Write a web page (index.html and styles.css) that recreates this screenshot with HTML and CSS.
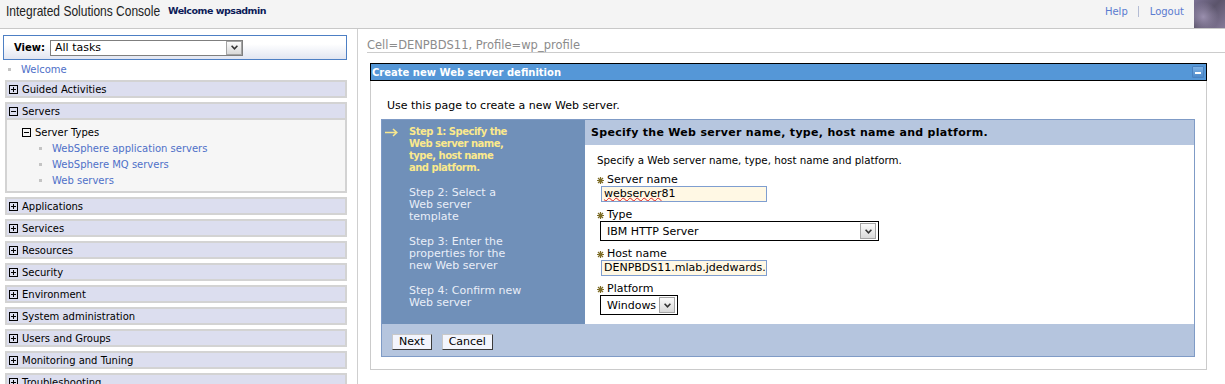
FILE: index.html
```html
<!DOCTYPE html>
<html lang="en">
<head>
<meta charset="utf-8">
<title>Integrated Solutions Console</title>
<link rel="stylesheet" href="styles.css">
</head>
<body>
<header class="topbar">
  <div class="brand"><span class="brand-text">Integrated Solutions Console</span></div>
  <div class="welcome">Welcome wpsadmin</div>
  <nav class="toplinks"><a href="#">Help</a><span class="sep"></span><a href="#">Logout</a></nav>
  <div class="photo"></div>
</header>
<div class="layout">
  <aside class="sidebar">
    <div class="viewbox">
      <span class="view-label">View:</span>
      <div class="dropdown view-dd"><span>All tasks</span><span class="dd-btn"><svg width="7" height="5" viewBox="0 0 7 5"><polyline points="0.6,0.8 3.5,3.8 6.4,0.8" fill="none" stroke="#333" stroke-width="1.6"/></svg></span></div>
    </div>
    <div class="welcome-link"><span class="bullet"></span><a href="#">Welcome</a></div>
    <ul class="navlist">
      <li><div class="navbar"><svg class="tog" width="9" height="9" viewBox="0 0 9 9"><rect x="0.5" y="0.5" width="8" height="8" fill="none" stroke="#000"/><path d="M2 4.5H7M4.5 2V7" stroke="#000"/></svg>Guided Activities</div></li>
      <li>
        <div class="navbar"><svg class="tog" width="9" height="9" viewBox="0 0 9 9"><rect x="0.5" y="0.5" width="8" height="8" fill="none" stroke="#000"/><path d="M2 4.5H7" stroke="#000"/></svg>Servers</div>
        <div class="navbody">
          <div class="subhead"><svg class="tog" width="9" height="9" viewBox="0 0 9 9"><rect x="0.5" y="0.5" width="8" height="8" fill="none" stroke="#000"/><path d="M2 4.5H7" stroke="#000"/></svg>Server Types</div>
          <ul class="sublinks">
            <li><span class="bullet"></span><a href="#">WebSphere application servers</a></li>
            <li><span class="bullet"></span><a href="#">WebSphere MQ servers</a></li>
            <li><span class="bullet"></span><a href="#">Web servers</a></li>
          </ul>
        </div>
      </li>
      <li><div class="navbar"><svg class="tog" width="9" height="9" viewBox="0 0 9 9"><rect x="0.5" y="0.5" width="8" height="8" fill="none" stroke="#000"/><path d="M2 4.5H7M4.5 2V7" stroke="#000"/></svg>Applications</div></li>
      <li><div class="navbar"><svg class="tog" width="9" height="9" viewBox="0 0 9 9"><rect x="0.5" y="0.5" width="8" height="8" fill="none" stroke="#000"/><path d="M2 4.5H7M4.5 2V7" stroke="#000"/></svg>Services</div></li>
      <li><div class="navbar"><svg class="tog" width="9" height="9" viewBox="0 0 9 9"><rect x="0.5" y="0.5" width="8" height="8" fill="none" stroke="#000"/><path d="M2 4.5H7M4.5 2V7" stroke="#000"/></svg>Resources</div></li>
      <li><div class="navbar"><svg class="tog" width="9" height="9" viewBox="0 0 9 9"><rect x="0.5" y="0.5" width="8" height="8" fill="none" stroke="#000"/><path d="M2 4.5H7M4.5 2V7" stroke="#000"/></svg>Security</div></li>
      <li><div class="navbar"><svg class="tog" width="9" height="9" viewBox="0 0 9 9"><rect x="0.5" y="0.5" width="8" height="8" fill="none" stroke="#000"/><path d="M2 4.5H7M4.5 2V7" stroke="#000"/></svg>Environment</div></li>
      <li><div class="navbar"><svg class="tog" width="9" height="9" viewBox="0 0 9 9"><rect x="0.5" y="0.5" width="8" height="8" fill="none" stroke="#000"/><path d="M2 4.5H7M4.5 2V7" stroke="#000"/></svg>System administration</div></li>
      <li><div class="navbar"><svg class="tog" width="9" height="9" viewBox="0 0 9 9"><rect x="0.5" y="0.5" width="8" height="8" fill="none" stroke="#000"/><path d="M2 4.5H7M4.5 2V7" stroke="#000"/></svg>Users and Groups</div></li>
      <li><div class="navbar"><svg class="tog" width="9" height="9" viewBox="0 0 9 9"><rect x="0.5" y="0.5" width="8" height="8" fill="none" stroke="#000"/><path d="M2 4.5H7M4.5 2V7" stroke="#000"/></svg>Monitoring and Tuning</div></li>
      <li><div class="navbar"><svg class="tog" width="9" height="9" viewBox="0 0 9 9"><rect x="0.5" y="0.5" width="8" height="8" fill="none" stroke="#000"/><path d="M2 4.5H7M4.5 2V7" stroke="#000"/></svg>Troubleshooting</div></li>
    </ul>
  </aside>
  <main class="main">
    <div class="cellpath">Cell=DENPBDS11, Profile=wp_profile</div>
    <section class="portlet">
      <div class="portlet-title"><span>Create new Web server definition</span><span class="minimize"><span class="min-bar"></span></span></div>
      <div class="portlet-body">
        <p class="intro">Use this page to create a new Web server.</p>
        <div class="wizard">
          <div class="wizard-main">
            <div class="steps">
              <div class="step current"><span class="step-mark"><svg width="13" height="9" viewBox="0 0 13 9"><path d="M0 4.5H11.5M8 1L11.8 4.5L8 8" fill="none" stroke="#f8e88e" stroke-width="1.5"/></svg></span><span>Step 1: Specify the<br>Web server name,<br>type, host name<br>and platform.</span></div>
              <div class="step"><span class="step-mark"></span><span>Step 2: Select a<br>Web server<br>template</span></div>
              <div class="step"><span class="step-mark"></span><span>Step 3: Enter the<br>properties for the<br>new Web server</span></div>
              <div class="step"><span class="step-mark"></span><span>Step 4: Confirm new<br>Web server</span></div>
            </div>
            <div class="panel">
              <div class="panel-head">Specify the Web server name, type, host name and platform.</div>
              <div class="panel-body">
                <p class="panel-desc">Specify a Web server name, type, host name and platform.</p>
                <div class="field">
                  <div class="field-label"><svg width="7" height="7" viewBox="0 0 7 7"><path d="M3.5 0V7M0 3.5H7M1 1L6 6M6 1L1 6" stroke="#7d6c26" stroke-width="1.2"/></svg>Server name</div>
                  <div class="textfield"><span class="misspelled">webserver</span>81</div>
                </div>
                <div class="field">
                  <div class="field-label"><svg width="7" height="7" viewBox="0 0 7 7"><path d="M3.5 0V7M0 3.5H7M1 1L6 6M6 1L1 6" stroke="#7d6c26" stroke-width="1.2"/></svg>Type</div>
                  <div class="select type-select"><span>IBM HTTP Server</span><span class="dd-btn"><svg width="7" height="5" viewBox="0 0 7 5"><polyline points="0.6,0.8 3.5,3.8 6.4,0.8" fill="none" stroke="#333" stroke-width="1.6"/></svg></span></div>
                </div>
                <div class="field">
                  <div class="field-label"><svg width="7" height="7" viewBox="0 0 7 7"><path d="M3.5 0V7M0 3.5H7M1 1L6 6M6 1L1 6" stroke="#7d6c26" stroke-width="1.2"/></svg>Host name</div>
                  <div class="textfield">DENPBDS11.mlab.jdedwards.c</div>
                </div>
                <div class="field">
                  <div class="field-label"><svg width="7" height="7" viewBox="0 0 7 7"><path d="M3.5 0V7M0 3.5H7M1 1L6 6M6 1L1 6" stroke="#7d6c26" stroke-width="1.2"/></svg>Platform</div>
                  <div class="select platform-select"><span>Windows</span><span class="dd-btn"><svg width="7" height="5" viewBox="0 0 7 5"><polyline points="0.6,0.8 3.5,3.8 6.4,0.8" fill="none" stroke="#333" stroke-width="1.6"/></svg></span></div>
                </div>
              </div>
            </div>
          </div>
          <div class="wizard-buttons"><button type="button">Next</button><button type="button">Cancel</button></div>
        </div>
      </div>
    </section>
  </main>
</div>
</body>
</html>
```

FILE: styles.css
```css
* { box-sizing: border-box; }
html, body { height: 100%; }
body {
  margin: 0;
  font-family: "DejaVu Sans", Verdana, sans-serif;
  font-size: 10px;
  color: #000;
  background: #fff;
  overflow: hidden;
}
a { text-decoration: none; }

/* header */
.topbar {
  display: flex;
  align-items: flex-start;
  height: 29px;
  background: #f4f4f4;
  border-bottom: 1px solid #c8c8c8;
}
.brand {
  width: 168px;
  flex: none;
  padding-left: 6px;
  line-height: 22px;
  white-space: nowrap;
}
.brand-text {
  display: inline-block;
  font-family: "Liberation Sans", Arial, sans-serif;
  font-size: 15px;
  color: #222;
  transform: scaleX(0.8);
  transform-origin: left center;
}
.welcome {
  font-weight: bold;
  font-size: 9.5px;
  line-height: 22px;
  letter-spacing: -0.5px;
  color: #0c1b58;
}
.toplinks {
  margin-left: auto;
  margin-right: 10px;
  display: flex;
  align-items: center;
  height: 22px;
  font-size: 10px;
}
.toplinks a { color: #5a7bd0; }
.sep {
  width: 1px;
  height: 11px;
  background: #b4bcd4;
  margin: 0 11px 0 10px;
}
.photo {
  width: 31px;
  height: 28px;
  background:
    radial-gradient(circle at 30% 60%, #9a8fae 0, transparent 55%),
    linear-gradient(135deg, #7b7193 0%, #5b546b 45%, #857a99 100%);
}

/* layout */
.layout { display: flex; }
.sidebar {
  width: 357px;
  flex: none;
  padding: 6px 10px 0 3px;
}
.main {
  flex: 1;
  min-width: 0;
  border-left: 1px solid #cfcfcf;
  min-height: calc(100vh - 29px);
}

/* sidebar */
.viewbox {
  display: flex;
  align-items: center;
  height: 25px;
  border: 1px solid #4d7fc4;
  background: linear-gradient(#ffffff 35%, #e1e5f1);
  padding-left: 10px;
}
.view-label {
  width: 36px;
  font-weight: bold;
  font-size: 10px;
}
.dropdown {
  display: flex;
  align-items: center;
  background: #fff;
  border: 1px solid #7f7f7f;
}
.view-dd {
  width: 193px;
  height: 16px;
  padding: 0 0 0 4px;
  font-size: 11px;
}
.dd-btn {
  margin-left: auto;
  width: 16px;
  height: 14px;
  flex: none;
  border: 1px solid #a4a4a4;
  background: linear-gradient(#fbfbfb, #d9d9d9);
  display: flex;
  align-items: center;
  justify-content: center;
}
.welcome-link {
  display: flex;
  align-items: center;
  height: 17px;
  margin-top: 1px;
  padding-left: 5px;
}
.bullet {
  width: 3px;
  height: 3px;
  flex: none;
  background: #c4c4c4;
}
.welcome-link a,
.sublinks a {
  margin-left: 10px;
  color: #4f70c8;
}
.navlist {
  list-style: none;
  margin: 2px 0 0 2px;
  padding: 0;
  display: flex;
  flex-direction: column;
  gap: 4px;
}
.navbar {
  display: flex;
  align-items: center;
  gap: 4px;
  height: 18px;
  padding-left: 2px;
  background: #dcdeef;
  border: 2px solid #d3d3d3;
}
.tog { flex: none; }
.navbody {
  border: 2px solid #d3d3d3;
  border-top: none;
  background: #f6f6f6;
  padding: 4px 0 3px 15px;
}
.subhead {
  display: flex;
  align-items: center;
  gap: 4px;
  height: 16px;
}
.sublinks {
  list-style: none;
  margin: 0;
  padding: 0 0 0 17px;
}
.sublinks li {
  display: flex;
  align-items: center;
  height: 16px;
}

/* main */
.cellpath {
  margin-left: 9px;
  height: 24px;
  padding-top: 10px;
  line-height: 13px;
  border-bottom: 1px solid #cccccc;
  font-size: 11.5px;
  color: #8c8c8c;
}
.portlet { margin: 10px 18px 0 12px; }
.portlet-title {
  display: flex;
  align-items: center;
  height: 18px;
  padding: 0 2px 0 1px;
  background: #5597d7;
  border: 1px solid #000;
  color: #fff;
  font-weight: bold;
  font-size: 10px;
}
.minimize {
  margin-left: auto;
  width: 12px;
  height: 12px;
  border: 1px solid #4a82c0;
  border-radius: 1px;
  background: linear-gradient(#7db2e6, #4d89c9);
  display: flex;
  align-items: flex-end;
  justify-content: center;
  padding-bottom: 3px;
}
.min-bar {
  width: 6px;
  height: 2px;
  background: #fff;
}
.portlet-body {
  border: 1px solid #cbcbcb;
  border-top: none;
  padding: 18px 11px 12px 10px;
}
.intro {
  margin: 0 0 6px;
  padding-left: 6px;
  font-size: 11px;
  line-height: 14px;
}

/* wizard */
.wizard { border: 1px solid #7f9bc6; }
.wizard-main {
  display: flex;
  height: 204px;
}
.steps {
  width: 203px;
  flex: none;
  background: #7090b9;
  padding: 6px 0 0 3px;
}
.step {
  display: flex;
  margin-bottom: 13px;
  font-size: 11px;
  line-height: 12px;
  color: #e9eef8;
}
.step.current {
  color: #fbe98c;
  font-weight: bold;
  font-size: 10px;
  letter-spacing: -0.5px;
}
.step-mark {
  width: 24px;
  height: 12px;
  flex: none;
  display: flex;
  align-items: center;
}
.panel {
  flex: 1;
  background: #fff;
}
.panel-head {
  height: 25px;
  line-height: 25px;
  padding-left: 6px;
  background: #b6c6df;
  font-weight: bold;
  font-size: 11px;
  letter-spacing: 0.3px;
}
.panel-body { padding: 8px 0 0 12px; }
.panel-desc {
  margin: 0;
  font-size: 10.3px;
  line-height: 14px;
}
.field { margin-top: 7px; }
.field-label {
  display: flex;
  align-items: center;
  gap: 3px;
  height: 12px;
  font-size: 11px;
  line-height: 12px;
}
.textfield {
  margin-left: 4px;
  width: 166px;
  height: 16px;
  padding-left: 2px;
  border: 1px solid #7f9ed0;
  background: #fff8e4;
  font-size: 11px;
  line-height: 14px;
  white-space: nowrap;
  overflow: hidden;
}
.misspelled {
  text-decoration: underline wavy #e02020;
  text-decoration-thickness: 1px;
  text-underline-offset: 0;
}
.select {
  margin-left: 3px;
  height: 20px;
  display: flex;
  align-items: center;
  padding: 0 2px 0 6px;
  border: 1px solid #000;
  background: #fff;
  font-size: 11px;
}
.select .dd-btn { height: 16px; }
.type-select { width: 279px; }
.platform-select { width: 78px; }
.wizard-buttons {
  height: 32px;
  display: flex;
  align-items: flex-start;
  gap: 10px;
  padding: 10px 0 0 10px;
  background: #b5c5de;
}
.wizard-buttons button {
  height: 16px;
  padding: 0 6px;
  font-family: inherit;
  font-size: 11px;
  line-height: 14px;
  color: #000;
  background: #f3f5fd;
  border: 1px solid;
  border-color: #c8c8c8 #3c3c3c #3c3c3c #c8c8c8;
  border-radius: 0;
}
```
